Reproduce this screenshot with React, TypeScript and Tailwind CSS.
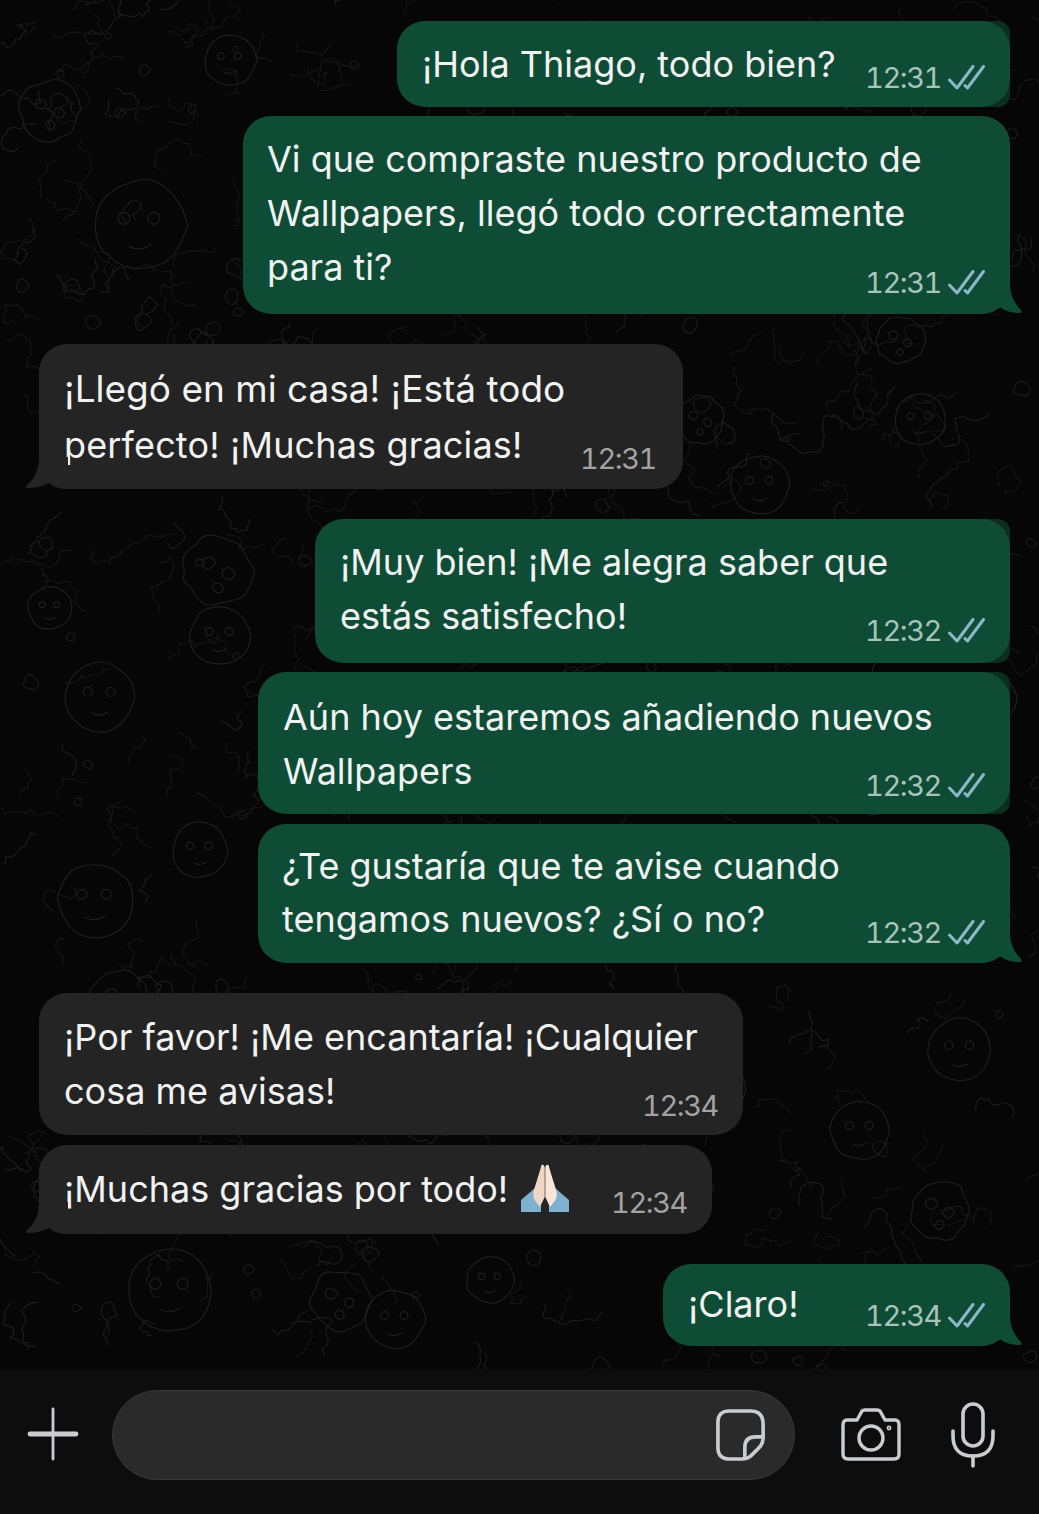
import React from "react";

type Msg = {
  lines: string[]; time: string; out: boolean; tail?: boolean; emoji?: boolean; corner?: boolean;
  box: string; text: string; meta: string; first?: string;
};

const msgs: Msg[] = [
  { lines: ["¡Hola Thiago, todo bien?"], time: "12:31", out: true, corner: true, box: "w-[613px] h-[86px] mt-0 self-end", text: "pt-[16px] pl-[25px] leading-[54px]", meta: "pb-[14px]" },
  { lines: ["Vi que compraste nuestro producto de", "Wallpapers, llegó todo correctamente", "para ti?"], time: "12:31", out: true, tail: true, box: "w-[767px] h-[198px] mt-[9px] self-end", text: "pt-[16px] pl-[24px] leading-[54px]", meta: "pb-[16px]" },
  { lines: ["¡Llegó en mi casa! ¡Está todo", "perfecto! ¡Muchas gracias!"], time: "12:31", out: false, tail: true, first: "text-[37px] tracking-normal", box: "w-[644px] h-[145px] mt-[30px] self-start", text: "pt-[17px] pl-[25px] leading-[56px] tracking-[0.15px]", meta: "pb-[15px] mr-[2px]" },
  { lines: ["¡Muy bien! ¡Me alegra saber que", "estás satisfecho!"], time: "12:32", out: true, corner: true, box: "w-[695px] h-[144px] mt-[30px] self-end", text: "pt-[16px] pl-[25px] leading-[54px]", meta: "pb-[17px]" },
  { lines: ["Aún hoy estaremos añadiendo nuevos", "Wallpapers"], time: "12:32", out: true, corner: true, box: "w-[752px] h-[142px] mt-[9px] self-end", text: "pt-[18px] pl-[25px] leading-[54px]", meta: "pb-[13px]" },
  { lines: ["¿Te gustaría que te avise cuando", "tengamos nuevos? ¿Sí o no?"], time: "12:32", out: true, tail: true, box: "w-[752px] h-[139px] mt-[10px] self-end", text: "pt-[16px] pl-[24px] leading-[53px]", meta: "pb-[15px]" },
  { lines: ["¡Por favor! ¡Me encantaría! ¡Cualquier", "cosa me avisas!"], time: "12:34", out: false, box: "w-[704px] h-[142px] mt-[30px] self-start", text: "pt-[17px] pl-[25px] leading-[54px]", meta: "pb-[14px]" },
  { lines: ["¡Muchas gracias por todo!"], time: "12:34", out: false, tail: true, emoji: true, box: "w-[673px] h-[89px] mt-[10px] self-start", text: "pt-[17px] pl-[25px] leading-[54px]", meta: "pb-[16px]" },
  { lines: ["¡Claro!"], time: "12:34", out: true, tail: true, box: "w-[347px] h-[82px] mt-[30px] self-end", text: "pt-[13px] pl-[25px] leading-[54px]", meta: "pb-[15px]" },
];

function Ticks() {
  return (
    <svg width="37" height="26" viewBox="0 0 37 26" fill="none" stroke="#8db6c9" strokeWidth="3" strokeLinecap="round" strokeLinejoin="round" className="shrink-0 mb-[2px]">
      <path d="M1.5 15 L9 23 L25 1.5" />
      <path d="M17 20.5 L19.5 23 L35.5 1.5" />
    </svg>
  );
}

function Praying() {
  return (
    <svg width="50" height="49" viewBox="0 0 50 49" className="shrink-0 ml-[12px] mt-[-1px]">
      <path d="M1 48 L1 36 L15 24 L21 36 L21 48 Z" fill="#7fb0cf" />
      <path d="M49 48 L49 36 L35 24 L29 36 L29 48 Z" fill="#7fb0cf" />
      <path d="M21.5 1 Q24.4 0 24.7 4 L24.7 33 L20 43 L14.5 36 Q12 31 14.5 24 Q19 10 21.5 1 Z" fill="#efd6c4" />
      <path d="M28.5 1 Q25.6 0 25.3 4 L25.3 33 L30 43 L35.5 36 Q38 31 35.5 24 Q31 10 28.5 1 Z" fill="#f7e5d7" />
    </svg>
  );
}

function Bubble({ m }: { m: Msg }) {
  const fill = m.out ? "#0e4c35" : "#242424";
  return (
    <div className={`relative flex justify-between rounded-[28px] ${m.out ? "bg-[#0e4c35]" : "bg-[#242424]"} ${m.box}`}>
      {m.corner && <div className="absolute right-0 inset-y-0 w-[40px] -z-10 rounded-[12px] bg-[#0b2e21]" />}
      <div className={`flex-1 min-w-0 text-[36px] text-[#f1f3f2] whitespace-nowrap ${m.text}`}>
        {m.lines.map((l, i) => (
          <div key={i} className={`flex items-center ${i === 0 && m.first ? m.first : ""}`}>
            {l}
            {m.emoji && <Praying />}
          </div>
        ))}
      </div>
      <div className={`flex items-end shrink-0 ${m.out ? "gap-[9px] pr-[25px]" : "pr-[27px]"} ${m.meta}`}>
        <span className={`w-[74px] text-[29px] leading-[30px] tabular-nums tracking-[-1.4px] ${m.out ? "text-[#a8c4b8]" : "text-[#a3a3a3]"}`}>{m.time}</span>
        {m.out && <Ticks />}
      </div>
      {m.tail && m.out && (
        <svg width="44" height="30" viewBox="0 0 44 30" className="absolute right-[-15px] bottom-0">
          <path d="M29 0 Q29 15 40 26 Q42 29 38 29 Q26 29 19 23 Q12 29 0 30 L0 0 Z" fill={fill} />
        </svg>
      )}
      {m.tail && !m.out && (
        <svg width="44" height="32" viewBox="0 0 44 32" className="absolute left-[-15px] bottom-0">
          <path d="M15 0 Q15 18 3 28 Q0 31 4 31 Q16 31 25 26 Q32 32 44 32 L44 0 Z" fill={fill} />
        </svg>
      )}
    </div>
  );
}

/* wallpaper doodles */
function rng(seed: number) {
  let s = seed;
  return () => {
    s = (s * 16807) % 2147483647;
    return (s - 1) / 2147483646;
  };
}

function wobble(cx: number, cy: number, r: number, amp: number, n: number, rand: () => number) {
  const pts: [number, number][] = [];
  for (let i = 0; i < n; i++) {
    const a = (i / n) * Math.PI * 2;
    const rr = r * (1 - amp + rand() * amp * 2);
    pts.push([cx + Math.cos(a) * rr, cy + Math.sin(a) * rr]);
  }
  let d = `M${pts[0][0].toFixed(1)} ${pts[0][1].toFixed(1)}`;
  for (let i = 0; i < n; i++) {
    const p = pts[(i + 1) % n];
    const q = pts[i];
    d += ` Q${q[0].toFixed(1)} ${q[1].toFixed(1)} ${((p[0] + q[0]) / 2).toFixed(1)} ${((p[1] + q[1]) / 2).toFixed(1)}`;
  }
  return d + " Z";
}

function squiggle(x0: number, y0: number, rand: () => number) {
  let x = x0;
  let y = y0;
  let a = rand() * Math.PI * 2;
  const n = 4 + Math.floor(rand() * 6);
  let d = `M${x.toFixed(1)} ${y.toFixed(1)}`;
  for (let i = 0; i < n; i++) {
    a += (rand() - 0.5) * 3.2;
    const l = 5 + rand() * 9;
    const mx = x + Math.cos(a) * l * 0.6 + (rand() - 0.5) * 10;
    const my = y + Math.sin(a) * l * 0.6 + (rand() - 0.5) * 10;
    x += Math.cos(a) * l;
    y += Math.sin(a) * l;
    d += ` Q${mx.toFixed(1)} ${my.toFixed(1)} ${x.toFixed(1)} ${y.toFixed(1)}`;
  }
  return d;
}

const faces: [number, number, number][] = [
  [140, 225, 46], [760, 485, 30], [960, 1050, 32], [220, 636, 30], [100, 697, 35], [50, 608, 22],
  [395, 1320, 30], [860, 1130, 30], [95, 900, 38], [720, 1090, 26], [995, 700, 22],
  [920, 420, 26], [170, 1290, 42], [490, 1280, 24], [200, 850, 28], [230, 60, 26],
];

const cookies: [number, number, number][] = [
  [218, 570, 35], [50, 110, 30], [700, 420, 24], [340, 1300, 30], [120, 1000, 30], [940, 1210, 30], [60, 1190, 26], [900, 340, 24],
];

function Wallpaper() {
  const rand = rng(4242);
  const bits = Array.from({ length: 480 }, () => squiggle(rand() * 1039, rand() * 1369, rand));
  const loops = Array.from({ length: 130 }, () => wobble(rand() * 1039, rand() * 1369, 3 + rand() * 6, 0.3, 7, rand));
  return (
    <svg width="1039" height="1369" viewBox="0 0 1039 1369" fill="none" strokeWidth="1.1" className="absolute left-0 top-0">
      {bits.map((d, i) => <path key={i} d={d} stroke={i % 3 ? "#161616" : "#1d1d1d"} />)}
      {loops.map((d, i) => <path key={i} d={d} stroke="#1b1b1b" />)}
      {faces.map(([x, y, r], i) => (
        <g key={i} stroke="#202020">
          <path d={wobble(x, y, r, 0.05, 14, rand)} />
          <circle cx={x - r * 0.35} cy={y - r * 0.15} r={r * 0.13} />
          <circle cx={x + r * 0.3} cy={y - r * 0.15} r={r * 0.13} />
          <path d={`M${x - r * 0.25} ${y + r * 0.45} Q${x} ${y + r * 0.6} ${x + r * 0.25} ${y + r * 0.42}`} />
        </g>
      ))}
      {cookies.map(([x, y, r], i) => (
        <g key={i} stroke="#1f1f1f">
          <path d={wobble(x, y, r, 0.1, 22, rand)} />
          <path d={wobble(x - r * 0.3, y - r * 0.2, r * 0.2, 0.2, 7, rand)} />
          <path d={wobble(x + r * 0.3, y + r * 0.1, r * 0.18, 0.2, 7, rand)} />
          <path d={wobble(x, y + r * 0.5, r * 0.16, 0.2, 7, rand)} />
        </g>
      ))}
    </svg>
  );
}

export default function App() {
  return (
    <div className="w-[1039px] h-[1514px] bg-[#060606] flex flex-col overflow-hidden font-['Inter','Liberation_Sans',sans-serif]">
      <div className="relative h-[1369px] shrink-0">
        <Wallpaper />
        <div className="relative z-0 flex flex-col pt-[21px] pl-[39px] pr-[29px]">
          {msgs.map((m, i) => <Bubble key={i} m={m} />)}
        </div>
      </div>
      <div className="flex-1 bg-[#0d0d0d] flex items-start pt-[21px] pl-[26px]">
        <svg width="54" height="54" viewBox="0 0 54 54" className="mt-[17px] shrink-0" fill="none" stroke="#c9cdd0" strokeLinecap="round">
          <path d="M27 2 V52" strokeWidth="2.8" />
          <path d="M4 27 H50" strokeWidth="4.8" />
        </svg>
        <div className="ml-[32px] w-[683px] h-[90px] rounded-[45px] bg-[#2a2a2a] border border-[#383838] flex items-center justify-end pr-[28px] shrink-0">
          <svg width="50" height="52" viewBox="0 0 52 54" fill="none" stroke="#c9cdd0" strokeWidth="3.8" strokeLinejoin="round" strokeLinecap="round" className="mt-[-1px]">
            <path d="M14 2 H36 Q49 2 49 16 V30 Q49 36 44 41 L36 49 Q32 52 27 52 H14 Q2 52 2 40 V14 Q2 2 14 2 Z" />
            <path d="M49 29 H41 Q30 29 30 40 V51" />
          </svg>
        </div>
        <svg width="60" height="54" viewBox="0 0 60 54" fill="none" stroke="#c9cdd0" strokeWidth="3.4" strokeLinejoin="round" className="ml-[46px] mt-[18px] shrink-0">
          <path d="M6 12 H16 L21 3 Q22 2 24 2 H36 Q38 2 39 3 L44 12 H54 Q58 12 58 17 V46 Q58 51 53 51 H7 Q2 51 2 46 V17 Q2 12 6 12 Z" />
          <circle cx="30" cy="30" r="12" />
          <circle cx="48" cy="20" r="1.6" strokeWidth="1.6" />
        </svg>
        <svg width="44" height="66" viewBox="0 0 44 66" fill="none" stroke="#c9cdd0" strokeWidth="3.6" strokeLinecap="round" className="ml-[50px] mt-[12px] shrink-0">
          <rect x="12" y="2" width="20" height="42" rx="10" />
          <path d="M2 29 V34 Q2 54 22 54 Q42 54 42 34 V29" />
          <path d="M22 54 V64" />
        </svg>
      </div>
    </div>
  );
}
